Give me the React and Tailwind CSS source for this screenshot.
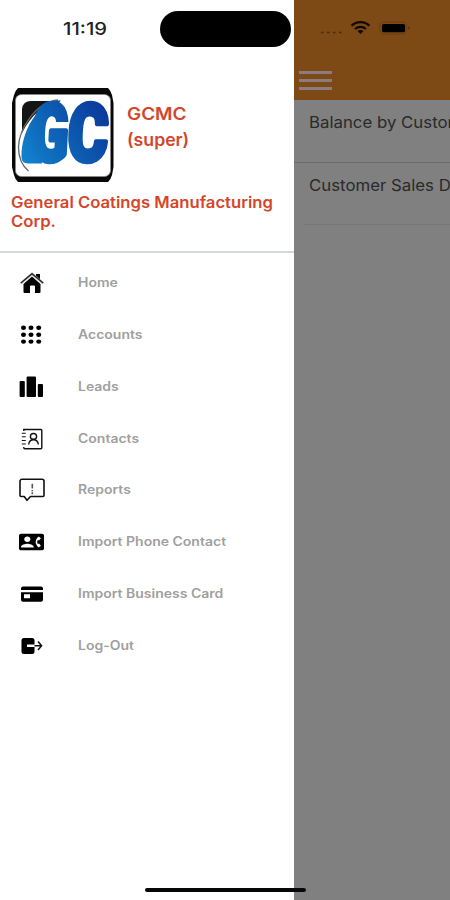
import { MdContactPhone } from "react-icons/md";

const HomeIcon = () => (
  <svg width="26" height="22" viewBox="0 0 26 22">
    <path d="M17 2h4v6l-4-3z" fill="#000" />
    <path d="M4.5 12 13 4.500l8.500 7.500v8a1 1 0 0 1-1 1H16v-6.500a1 1 0 0 0-1-1h-3a1 1 0 0 0-1 1V21H5.500a1 1 0 0 1-1-1z" fill="#000" />
    <path d="M1.800 11.500 13 2l11.200 9.500" fill="none" stroke="#ccc" strokeWidth="2.600" />
    <path d="M1.800 11 13 1.700l11.200 9.300" fill="none" stroke="#222" strokeWidth="1.300" />
  </svg>
);

const GridIcon = () => (
  <svg width="26" height="22" viewBox="0 0 26 22">
    {[3.800, 10.700, 17.600].map((y) =>
      [4.500, 12, 19.700].map((x) => <ellipse key={`${x}-${y}`} cx={x} cy={y} rx="2.500" ry="2.200" />)
    )}
  </svg>
);

const LeadsIcon = () => (
  <svg width="26" height="22" viewBox="0 0 26 22">
    <rect x="0.600" y="5" width="5.200" height="16" rx="1" />
    <rect x="7.600" y="0.600" width="9.400" height="20.400" rx="1" />
    <rect x="18.800" y="8" width="5.200" height="13" rx="1" />
  </svg>
);

const ContactsIcon = () => (
  <svg width="26" height="22" viewBox="0 0 26 22" fill="none" stroke="#111" strokeWidth="1.400">
    <path d="M4.800 3V1.500h17a1 1 0 0 1 1 1v17.200a1 1 0 0 1-1 1h-16a1 1 0 0 1-1-1V19" />
    <path d="M2.800 5.300h4M2.800 8.800h4M2.800 12.500h4M2.800 16h4" strokeWidth="1.100" />
    <ellipse cx="14.500" cy="8.400" rx="3.100" ry="2.900" />
    <path d="M9.600 16.500c.5-3 2.200-4.800 4.900-4.800s4.400 1.800 4.900 4.800" />
  </svg>
);

const ReportsIcon = () => (
  <svg width="28" height="24" viewBox="0 0 28 24" fill="none" stroke="#111" strokeWidth="1.600">
    <path d="M4 1.200h20a2 2 0 0 1 2 2v14.300a1 1 0 0 1-1 1H12.500L9 22.300l-2.800-3.800H3a1 1 0 0 1-1-1V3.200a2 2 0 0 1 2-2z" strokeLinejoin="round" />
    <path d="M14.300 5.800v4.700M14.300 12v1.200M14.300 14.200v2" stroke="#555" />
  </svg>
);

const CardIcon = () => (
  <svg width="24" height="18" viewBox="0 0 24 18">
    <path d="M1 5V3.500a2 2 0 0 1 2-2h18a2 2 0 0 1 2 2V5z" />
    <path fillRule="evenodd" d="M1 7.300h22v7.500a2 2 0 0 1-2 2H3a2 2 0 0 1-2-2zm3 2v4h6v-4z" />
  </svg>
);

const LogoutIcon = () => (
  <svg width="24" height="18" viewBox="0 0 24 18">
    <path d="M4 1h8a2.500 2.500 0 0 1 2.500 2.500v4H7v2.600h7.500v4.400A2.500 2.500 0 0 1 12 17H4a2.500 2.500 0 0 1-2.500-2.500v-11A2.500 2.500 0 0 1 4 1z" />
    <path d="M14.500 8.800h6.700M18 4.500l3.600 4.300L18 13" fill="none" stroke="#111" strokeWidth="1.500" />
  </svg>
);

const PhoneContactIcon = () => <MdContactPhone className="h-[22px] w-[25px]" preserveAspectRatio="none" />;

const menu = [
  { label: "Home", icon: HomeIcon },
  { label: "Accounts", icon: GridIcon },
  { label: "Leads", icon: LeadsIcon },
  { label: "Contacts", icon: ContactsIcon },
  { label: "Reports", icon: ReportsIcon },
  { label: "Import Phone Contact", icon: PhoneContactIcon },
  { label: "Import Business Card", icon: CardIcon },
  { label: "Log-Out", icon: LogoutIcon },
];

const Logo = () => (
  <svg width="104" height="97" viewBox="0 0 104 97" className="shrink-0">
    <defs>
      <linearGradient id="blue" gradientUnits="userSpaceOnUse" x1="10" y1="76" x2="98" y2="13">
        <stop offset="0" stopColor="#1285cf" />
        <stop offset="0.450" stopColor="#0d62b5" />
        <stop offset="1" stopColor="#0a3398" />
      </linearGradient>
    </defs>
    <path d="M7 1h90q3 3 4 7l1.500 8v64L101 88q-1 4-4 7H7q-3-3-4-7L1 80V16L3 8q1-4 4-7z" fill="#080808" />
    <rect x="4.500" y="7.500" width="95" height="82" rx="6" fill="#fff" stroke="#888" strokeWidth="0.800" />
    <path d="M11 46V22q1-8 9-8h27Q24 20 11 46z" fill="#151515" />
    <path d="M47 13C24 15 8 43 7.500 60c0 10 4 19 10 24" fill="none" stroke="#666" strokeWidth="1.300" />
    {/* blue swoosh behind the lettering */}
    <path d="M50 13.500h-4C27 17 10 44 10.500 70q0 6.500 6.500 6.500h14L29 58l6-27 7-9z" fill="url(#blue)" />
    <g className="font-['Roboto'] text-[80px] font-black" fill="url(#blue)" stroke="url(#blue)" strokeWidth="5" strokeLinejoin="round">
      <text x="23" y="73.500" transform="skewX(-3)" textLength="37" lengthAdjust="spacingAndGlyphs">G</text>
      <text x="59.500" y="73.500" transform="skewX(-3)" textLength="40" lengthAdjust="spacingAndGlyphs">C</text>
    </g>
    <path d="M39 35h19v5H39z" fill="#fff" />
  </svg>
);

const StatusIcons = () => (
  <svg width="94" height="16" viewBox="0 0 94 16" fill="none">
    <path d="M2 12.500h2.500M8 12.500h2.500M14 12.500h2.500M20 12.500h2.500" stroke="#4b2c09" strokeWidth="1.500" />
    <path d="M32.500 5.800c5-4.900 13-4.900 18 0M36 9c3.200-2.900 7.800-2.900 11 0" stroke="#120a02" strokeWidth="2.200" />
    <path d="m38.500 11 3 3 3-3c-1.800-1.500-4.200-1.500-6 0z" fill="#120a02" />
    <rect x="61" y="2" width="26" height="12" rx="3" stroke="#6a3f10" />
    <rect x="63" y="4" width="23" height="8.300" rx="1.500" fill="#000" />
    <path d="M90 6.500v3" stroke="#5b360d" strokeWidth="1.500" />
  </svg>
);

const App = () => {
  return (
    <div className="relative flex h-[900px] w-[450px] overflow-hidden bg-white font-['Inter',sans-serif]">
      {/* Drawer */}
      <aside className="flex w-[294px] shrink-0 flex-col bg-white">
        <div className="flex h-[87px] items-start justify-between pt-[11px] pr-[3px] pl-[63px]">
          <span className="mt-[6px] origin-left scale-x-[1.190] text-[17px] leading-6 font-medium text-[#222]">11:19</span>
          <div className="h-[36px] w-[131px] rounded-full bg-black" />
        </div>

        <div className="flex h-[105px] gap-[12px] pl-[11px]">
          <Logo />
          <div className="pt-[14px] text-[17.500px] leading-[25.500px] font-semibold text-[#d5452a]">
            <p className="origin-left scale-x-[1.080]">GCMC</p>
            <p className="origin-left scale-x-[1.010]">(super)</p>
          </div>
        </div>
        <div className="h-[61px] border-b-2 border-[#d5d8da] pt-[2px] pl-[11px]">
          <p className="origin-left scale-x-[1.075] text-[15.500px] leading-[18.500px] font-semibold whitespace-nowrap text-[#d5452a]">
            General Coatings Manufacturing
            <br />
            Corp.
          </p>
        </div>

        <nav className="pt-[4px]">
          {menu.map(({ label, icon: Icon }) => (
            <div key={label} className="flex h-[51.870px] items-center">
              <span className="flex w-[63px] justify-center">
                <Icon />
              </span>
              <span className="mt-px ml-[15px] origin-left scale-x-[1.120] text-[12.500px] font-semibold whitespace-nowrap text-[#a0a0a0]">{label}</span>
            </div>
          ))}
        </nav>
      </aside>

      {/* Page behind the drawer */}
      <main className="min-w-0 flex-1 overflow-hidden bg-[#808080]">
        <header className="h-[100px] bg-[#7d4a15] pt-[20px] pl-[5px]">
          <div className="pl-[20px]">
            <StatusIcons />
          </div>
          <div className="mt-[35px] flex w-[33px] flex-col gap-[5px]">
            <span className="h-[3px] bg-[#8a7c80]" />
            <span className="h-[3px] bg-[#8a7c80]" />
            <span className="h-[3px] bg-[#8a7c80]" />
          </div>
        </header>
        <div className="h-[62.500px] border-b border-[#6c6c6c] pt-[10px] pl-[15px]">
          <span className="block origin-left scale-x-[1.050] text-[16px] leading-6 whitespace-nowrap text-[#2a2a2a]">Balance by Customer</span>
        </div>
        <div className="ml-[10px] h-[62.500px] border-b border-[#777] pt-[10px] pl-[5px]">
          <span className="block origin-left scale-x-[1.050] text-[16px] leading-6 whitespace-nowrap text-[#2a2a2a]">Customer Sales Detail</span>
        </div>
      </main>

      {/* Home indicator */}
      <div className="absolute bottom-[8px] left-[145px] h-[4px] w-[161px] rounded-full bg-[#050808]" />
    </div>
  );
};

export default App;
